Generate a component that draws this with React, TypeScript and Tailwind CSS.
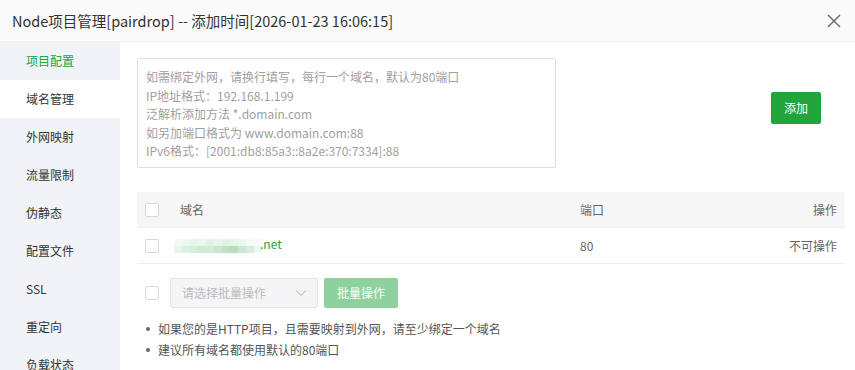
import React from 'react';

const menu = ['项目配置', '域名管理', '外网映射', '流量限制', '伪静态', '配置文件', 'SSL', '重定向', '负载状态'];

const hint = [
    '如需绑定外网，请换行填写，每行一个域名，默认为80端口',
    'IP地址格式：192.168.1.199',
    '泛解析添加方法 *.domain.com',
    '如另加端口格式为 www.domain.com:88',
    'IPv6格式：[2001:db8:85a3::8a2e:370:7334]:88',
];

// pixelated blur over the domain name
const blurTop = ['#f3faf4', '#eef8f0', '#e6f5e9', '#eaf6ec', '#e2f3e5', '#e8f6ea', '#e0f2e3', '#e4f4e7', '#eef8f0', '#f5fbf6', '#f8fcf9'];
const blurBottom = ['#e8f6ea', '#dcf0e0', '#d6eedb', '#cfead5', '#d3ecd8', '#c8e7ce', '#bde2c5', '#b7dfbf', '#cbe9d1', '#d9efdd', '#eef8f0'];

const Checkbox = () => (
    <span className="inline-block w-[14px] h-[14px] border border-[#d8d8d8] rounded-[2px] bg-white shrink-0" />
);

export default function App() {
    return (
        <div
            className="w-[855px] h-[370px] overflow-hidden bg-white flex flex-col text-[#333]"
            style={{ fontFamily: '"Noto Sans CJK SC", "Noto Sans", sans-serif' }}
        >
            {/* Title bar */}
            <div className="h-[42px] shrink-0 bg-[#fafafa] border-b border-[#f0f0f0] flex items-center justify-between pl-[12px] pr-[14px]">
                <span className="text-[14.5px] text-[#333]">Node项目管理[pairdrop] -- 添加时间[2026-01-23 16:06:15]</span>
                <svg width="14" height="14" viewBox="0 0 14 14" className="text-[#666]">
                    <path d="M1 1L13 13M13 1L1 13" stroke="currentColor" strokeWidth="1.4" />
                </svg>
            </div>

            <div className="flex flex-1 min-h-0">
                {/* Side menu */}
                <div className="w-[120px] shrink-0 bg-[#f2f3f7] flex flex-col">
                    {menu.map((m, i) => (
                        <div
                            key={m}
                            className={`h-[38px] shrink-0 flex items-center pl-[26px] text-[12px] ${
                                i === 0 ? 'text-[#20a53a]' : i === 1 ? 'bg-white text-[#333]' : 'text-[#333]'
                            }`}
                        >
                            {m}
                        </div>
                    ))}
                </div>

                {/* Content */}
                <div className="flex-1 pl-[17px] pr-[10px] pt-[16px]">
                    <div className="flex items-start">
                        <div className="w-[419px] h-[110px] border border-[#e0e0e0] rounded-[2px] pl-[8px] pt-[9px] text-[12px] leading-[18.5px] text-[#a0a0a0]">
                            {hint.map(h => (
                                <div key={h}>{h}</div>
                            ))}
                        </div>
                        <button className="ml-auto mr-[24px] mt-[34px] w-[50px] h-[32px] bg-[#20a53a] text-white text-[12px] rounded-[2px]">
                            添加
                        </button>
                    </div>

                    {/* Domain table */}
                    <div className="mt-[24px] text-[12px]">
                        <div className="h-[36px] bg-[#f6f6f6] border-b border-[#eee] flex items-center px-[8px] text-[#666]">
                            <Checkbox />
                            <span className="ml-[21px] w-[400px]">域名</span>
                            <span className="flex-1">端口</span>
                            <span>操作</span>
                        </div>
                        <div className="h-[36px] border-b border-[#eee] flex items-center px-[8px] text-[#666]">
                            <Checkbox />
                            <span className="ml-[15px] w-[406px] flex items-center">
                                <span className="flex flex-col">
                                    <span className="flex">
                                        {blurTop.map((c, i) => (
                                            <span key={i} className="w-[8px] h-[7px]" style={{ background: c }} />
                                        ))}
                                    </span>
                                    <span className="flex">
                                        {blurBottom.map((c, i) => (
                                            <span key={i} className="w-[8px] h-[7px]" style={{ background: c }} />
                                        ))}
                                    </span>
                                </span>
                                <span className="text-[#20a53a] -mt-[4px] -ml-[2px]">.net</span>
                            </span>
                            <span className="flex-1">80</span>
                            <span>不可操作</span>
                        </div>
                    </div>

                    {/* Batch bar */}
                    <div className="mt-[14px] flex items-center pl-[8px] text-[12px]">
                        <Checkbox />
                        <div className="ml-[11px] w-[148px] h-[30px] border border-[#e4e4e4] bg-[#f5f5f7] rounded-[2px] flex items-center pl-[11px] pr-[10px] text-[#bbb]">
                            <span className="flex-1">请选择批量操作</span>
                            <svg width="12" height="8" viewBox="0 0 12 8">
                                <path d="M1 1.5L6 6.5L11 1.5" fill="none" stroke="#c8c8c8" strokeWidth="1.2" />
                            </svg>
                        </div>
                        <button className="ml-[6px] w-[74px] h-[30px] bg-[#8fd19e] text-white rounded-[2px] text-[12px]">
                            批量操作
                        </button>
                    </div>

                    <ul className="mt-[10px] text-[12px] leading-[21px] text-[#555]">
                        <li className="flex items-center pl-[9px]">
                            <span className="w-[4px] h-[4px] rounded-full bg-[#666] mr-[8px]" />
                            如果您的是HTTP项目，且需要映射到外网，请至少绑定一个域名
                        </li>
                        <li className="flex items-center pl-[9px]">
                            <span className="w-[4px] h-[4px] rounded-full bg-[#666] mr-[8px]" />
                            建议所有域名都使用默认的80端口
                        </li>
                    </ul>
                </div>
            </div>
        </div>
    );
}
